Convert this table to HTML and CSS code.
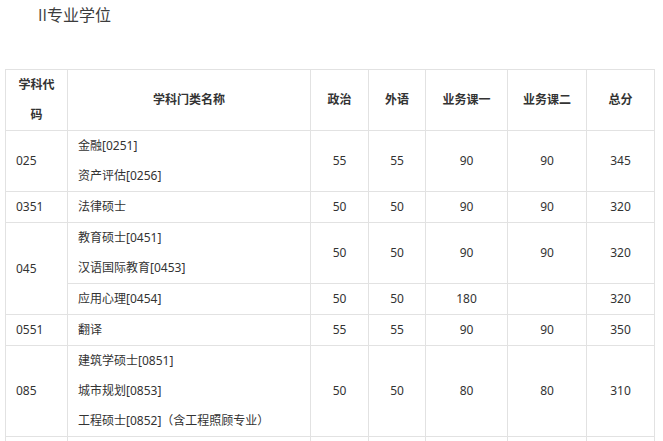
FILE: index.html
```html
<!DOCTYPE html>
<html lang="zh-CN">
<head>
<meta charset="utf-8">
<title>专业学位</title>
<link rel="stylesheet" href="styles.css">
</head>
<body>
<div class="title">II专业学位</div>
<table class="score">
  <colgroup>
    <col class="c-code"><col class="c-name"><col class="c-pol"><col class="c-lang"><col class="c-b1"><col class="c-b2"><col class="c-total">
  </colgroup>
  <thead>
    <tr>
      <th class="center">学科代<br>码</th>
      <th class="center">学科门类名称</th>
      <th class="center">政治</th>
      <th class="center">外语</th>
      <th class="center">业务课一</th>
      <th class="center">业务课二</th>
      <th class="center">总分</th>
    </tr>
  </thead>
  <tbody>
    <tr>
      <td>025</td>
      <td>金融[0251]<br>资产评估[0256]</td>
      <td class="center">55</td><td class="center">55</td><td class="center">90</td><td class="center">90</td><td class="center">345</td>
    </tr>
    <tr>
      <td>0351</td>
      <td>法律硕士</td>
      <td class="center">50</td><td class="center">50</td><td class="center">90</td><td class="center">90</td><td class="center">320</td>
    </tr>
    <tr>
      <td rowspan="2">045</td>
      <td>教育硕士[0451]<br>汉语国际教育[0453]</td>
      <td class="center">50</td><td class="center">50</td><td class="center">90</td><td class="center">90</td><td class="center">320</td>
    </tr>
    <tr>
      <td>应用心理[0454]</td>
      <td class="center">50</td><td class="center">50</td><td class="center">180</td><td class="center"></td><td class="center">320</td>
    </tr>
    <tr>
      <td>0551</td>
      <td>翻译</td>
      <td class="center">55</td><td class="center">55</td><td class="center">90</td><td class="center">90</td><td class="center">350</td>
    </tr>
    <tr>
      <td>085</td>
      <td>建筑学硕士[0851]<br>城市规划[0853]<br>工程硕士[0852]（含工程照顾专业）</td>
      <td class="center">50</td><td class="center">50</td><td class="center">80</td><td class="center">80</td><td class="center">310</td>
    </tr>
    <tr class="empty-row">
      <td></td><td></td><td></td><td></td><td></td><td></td><td></td>
    </tr>
  </tbody>
</table>
</body>
</html>
```
FILE: styles.css
```css
html, body {
  margin: 0;
  padding: 0;
  background: #ffffff;
}
body {
  font-family: "Noto Sans", "Noto Sans CJK SC", sans-serif;
  color: #333333;
  font-size: 12px;
}
.title {
  height: 30px;
  line-height: 30px;
  padding-left: 38px;
  font-family: "Open Sans", "Noto Sans CJK SC", sans-serif;
  font-size: 16px;
  color: #3c3c3c;
}
.score {
  margin: 39px 0 0 5px;
  border-collapse: collapse;
  table-layout: fixed;
  width: 650px;
}
.c-code { width: 62px; }
.c-name { width: 243px; }
.c-pol { width: 58px; }
.c-lang { width: 57px; }
.c-b1 { width: 82px; }
.c-b2 { width: 79px; }
.c-total { width: 68px; }
.score th,
.score td {
  border: 1px solid #e2e2e2;
  padding: 0 10px;
  line-height: 30px;
  vertical-align: middle;
  text-align: left;
  white-space: nowrap;
}
.score th {
  font-weight: bold;
  color: #333333;
}
.score .center {
  text-align: center;
}
.empty-row td {
  height: 30px;
}
```
